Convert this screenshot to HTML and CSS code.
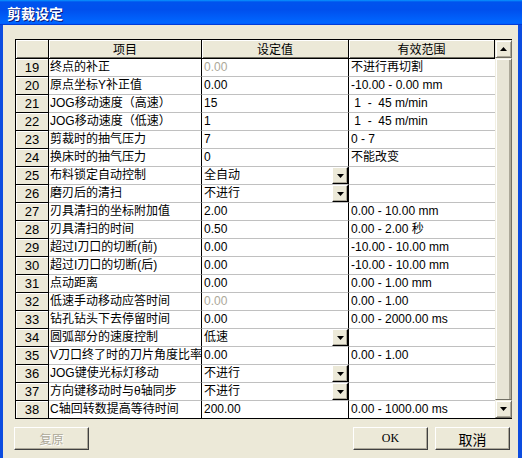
FILE: index.html
```html
<!DOCTYPE html>
<html>
<head>
<meta charset="utf-8">
<link rel="stylesheet" href="styles.css">
</head>
<body>
<div class="window">
  <div class="titlebar">剪裁设定</div>
  <div class="body">
    <div class="grid">
      <div class="table">
        <div class="row head"><div class="h"></div><div class="h">项目</div><div class="h">设定值</div><div class="h">有效范围</div></div>
        <div class="row"><div class="num">19</div><div class="c item">终点的补正</div><div class="c val dis">0.00</div><div class="c rng">不进行再切割</div></div>
        <div class="row"><div class="num">20</div><div class="c item">原点坐标Y补正值</div><div class="c val">0.00</div><div class="c rng">-10.00 - 0.00 mm</div></div>
        <div class="row"><div class="num">21</div><div class="c item">JOG移动速度（高速）</div><div class="c val">15</div><div class="c rng">&nbsp;1&nbsp; -&nbsp; 45 m/min</div></div>
        <div class="row"><div class="num">22</div><div class="c item">JOG移动速度（低速）</div><div class="c val">1</div><div class="c rng">&nbsp;1&nbsp; -&nbsp; 45 m/min</div></div>
        <div class="row"><div class="num">23</div><div class="c item">剪裁时的抽气压力</div><div class="c val">7</div><div class="c rng">0 - 7</div></div>
        <div class="row"><div class="num">24</div><div class="c item">换床时的抽气压力</div><div class="c val">0</div><div class="c rng">不能改变</div></div>
        <div class="row"><div class="num">25</div><div class="c item">布料锁定自动控制</div><div class="c val dd"><span>全自动</span><span class="ddbtn"><svg width="7" height="4" viewBox="0 0 7 4"><path d="M0 0H7L3.5 4Z"/></svg></span></div><div class="c rng"></div></div>
        <div class="row"><div class="num">26</div><div class="c item">磨刃后的清扫</div><div class="c val dd"><span>不进行</span><span class="ddbtn"><svg width="7" height="4" viewBox="0 0 7 4"><path d="M0 0H7L3.5 4Z"/></svg></span></div><div class="c rng"></div></div>
        <div class="row"><div class="num">27</div><div class="c item">刃具清扫的坐标附加值</div><div class="c val">2.00</div><div class="c rng">0.00 - 10.00 mm</div></div>
        <div class="row"><div class="num">28</div><div class="c item">刃具清扫的时间</div><div class="c val">0.50</div><div class="c rng">0.00 - 2.00 秒</div></div>
        <div class="row"><div class="num">29</div><div class="c item">超过I刀口的切断(前)</div><div class="c val">0.00</div><div class="c rng">-10.00 - 10.00 mm</div></div>
        <div class="row"><div class="num">30</div><div class="c item">超过I刀口的切断(后)</div><div class="c val">0.00</div><div class="c rng">-10.00 - 10.00 mm</div></div>
        <div class="row"><div class="num">31</div><div class="c item">点动距离</div><div class="c val">0.00</div><div class="c rng">0.00 - 1.00 mm</div></div>
        <div class="row"><div class="num">32</div><div class="c item">低速手动移动应答时间</div><div class="c val dis">0.00</div><div class="c rng">0.00 - 1.00</div></div>
        <div class="row"><div class="num">33</div><div class="c item">钻孔钻头下去停留时间</div><div class="c val">0.00</div><div class="c rng">0.00 - 2000.00 ms</div></div>
        <div class="row"><div class="num">34</div><div class="c item">圆弧部分的速度控制</div><div class="c val dd"><span>低速</span><span class="ddbtn"><svg width="7" height="4" viewBox="0 0 7 4"><path d="M0 0H7L3.5 4Z"/></svg></span></div><div class="c rng"></div></div>
        <div class="row"><div class="num">35</div><div class="c item">V刀口终了时的刀片角度比率</div><div class="c val">0.00</div><div class="c rng">0.00 - 1.00</div></div>
        <div class="row"><div class="num">36</div><div class="c item">JOG键使光标灯移动</div><div class="c val dd"><span>不进行</span><span class="ddbtn"><svg width="7" height="4" viewBox="0 0 7 4"><path d="M0 0H7L3.5 4Z"/></svg></span></div><div class="c rng"></div></div>
        <div class="row"><div class="num">37</div><div class="c item">方向键移动时与θ轴同步</div><div class="c val dd"><span>不进行</span><span class="ddbtn"><svg width="7" height="4" viewBox="0 0 7 4"><path d="M0 0H7L3.5 4Z"/></svg></span></div><div class="c rng"></div></div>
        <div class="row last"><div class="num">38</div><div class="c item">C轴回转数提高等待时间</div><div class="c val">200.00</div><div class="c rng">0.00 - 1000.00 ms</div></div>
      </div>
      <div class="scrollbar">
        <div class="sbbtn"><svg width="7" height="4" viewBox="0 0 7 4"><path d="M0 4H7L3.5 0Z"/></svg></div>
        <div class="thumb"></div>
        <div class="sbbtn"><svg width="7" height="4" viewBox="0 0 7 4"><path d="M0 0H7L3.5 4Z"/></svg></div>
      </div>
    </div>
    <div class="footer">
      <div class="button disabled">复原</div>
      <div class="spacer"></div>
      <div class="button ok">OK</div>
      <div class="button cancel">取消</div>
    </div>
  </div>
</div>
</body>
</html>
```
FILE: styles.css
```css
html, body {
  margin: 0;
  padding: 0;
}
body {
  width: 522px;
  height: 458px;
  overflow: hidden;
  background: #ECE9D8;
  font-family: "Liberation Sans", "Noto Sans CJK SC", sans-serif;
  font-size: 12px;
  color: #000;
}
.window {
  width: 522px;
  height: 458px;
  display: flex;
  flex-direction: column;
}
.titlebar {
  height: 25px;
  box-sizing: border-box;
  padding-left: 7px;
  display: flex;
  align-items: center;
  color: #fff;
  font-family: "Noto Sans CJK SC", sans-serif;
  font-weight: bold;
  font-size: 14px;
  text-shadow: 1px 1px #0A1A7A;
  background: linear-gradient(180deg, #0997ff 0%, #0053ee 8%, #0050ee 40%, #0066ff 88%, #0066ff 93%, #005bff 95%, #003dd7 96%, #003dd7 100%);
}
.body {
  flex: 1;
  background: #ECE9D8;
  border-left: 3px solid #0C4CE0;
  border-right: 4px solid #0C4CE0;
  padding: 14px 6px 0 12px;
}
.grid {
  display: flex;
  border-top: 1px solid #000;
  border-left: 1px solid #000;
  border-bottom: 1px solid #000;
  width: 497px;
  box-sizing: border-box;
}
.table {
  display: flex;
  flex-direction: column;
}
.row {
  display: grid;
  grid-template-columns: 33px 153px 147px 146px;
  height: 18px;
}
.row.head {
  height: 19px;
}
.row.last {
  height: 17px;
}
.row > div {
  box-sizing: border-box;
}
.h {
  background: #ECE9D8;
  border-right: 1px solid #000;
  border-bottom: 1px solid #000;
  box-shadow: inset 1px 1px #fff, inset 0 -1px #716F64;
  text-align: center;
  line-height: 17px;
  font-family: "Noto Sans CJK SC", sans-serif;
}
.num {
  background: #ECE9D8;
  border-right: 1px solid #000;
  border-bottom: 1px solid #000;
  box-shadow: inset 1px 1px #fff;
  text-align: center;
  font-size: 13px;
  line-height: 17px;
}
.c {
  background: #fff;
  border-bottom: 1px solid #C0C0C0;
  padding-left: 2px;
  line-height: 17px;
  white-space: nowrap;
  overflow: hidden;
}
.row.last .num,
.row.last .c {
  border-bottom: none;
}
.item,
.val {
  border-right: 1px solid #000;
}
.item {
  padding-left: 1px;
}
.dis {
  color: #ACA899;
}
.dd {
  display: flex;
  justify-content: space-between;
}
.ddbtn {
  width: 16px;
  height: 17px;
  box-sizing: border-box;
  background: #ECE9D8;
  border-top: 1px solid #fff;
  border-left: 1px solid #fff;
  border-right: 1px solid #000;
  border-bottom: 1px solid #000;
  box-shadow: inset -1px -1px #ACA899;
  display: flex;
  align-items: center;
  justify-content: center;
}
.scrollbar {
  width: 17px;
  display: flex;
  flex-direction: column;
}
.sbbtn {
  height: 18px;
  box-sizing: border-box;
  background: #ECE9D8;
  border: 1px solid;
  border-color: #F1EFE2 #716F64 #716F64 #F1EFE2;
  box-shadow: inset 1px 1px #fff, inset -1px -1px #ACA899;
  display: flex;
  align-items: center;
  justify-content: center;
}
.thumb {
  flex: 1;
  box-sizing: border-box;
  background: #E8E5D6;
  border: 1px solid;
  border-color: #F1EFE2 #716F64 #716F64 #F1EFE2;
  box-shadow: inset 1px 1px #fff, inset -2px 0 #ACA899;
}
.footer {
  display: flex;
  margin-top: 8px;
  margin-left: -1px;
  margin-right: 2px;
  gap: 7px;
}
.spacer {
  flex: 1;
}
.button {
  width: 75px;
  height: 23px;
  box-sizing: border-box;
  background: #ECE9D8;
  border: 1px solid;
  border-color: #fff #404040 #404040 #fff;
  box-shadow: inset -1px -1px #ACA899;
  display: flex;
  align-items: center;
  justify-content: center;
  font-family: "Noto Sans CJK SC", sans-serif;
  font-size: 12px;
}
.button.disabled {
  color: #ACA899;
  text-shadow: 1px 1px #fff;
}
.button.ok {
  font-family: "Liberation Serif", serif;
  font-size: 12px;
}
.button.cancel {
  font-size: 14px;
}
```
